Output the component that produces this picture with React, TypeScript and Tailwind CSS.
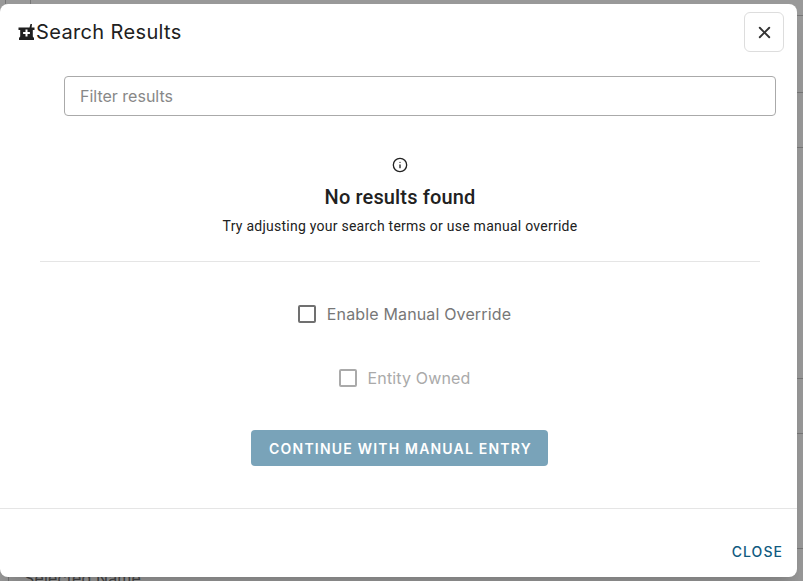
import React from "react";
import { X, Info } from "lucide-react";

const Mortar = () => (
  <svg width="17" height="17" viewBox="0 0 17 17" className="shrink-0">
    <path d="M0.5 3.5H11.5L12.5 0H14L13.6 3.5H16.5V6H14.8V12.5L16 14V16H1V14L2.2 12.5V6H0.5Z" fill="#1f1f1f" />
    <path d="M7.5 5.6H9.5V8H11.9V10H9.5V12.4H7.5V10H5.1V8H7.5Z" fill="#fff" />
  </svg>
);

export default function App() {
  return (
    <div className="relative h-[581px] w-[803px] overflow-hidden bg-[#999999] font-['Inter',sans-serif]">
      <div className="absolute left-[5px] top-0 h-[4px] w-px bg-[#777]" />
      <div className="absolute left-[30px] top-0 h-[4px] w-px bg-[#777]" />
      <div className="absolute left-[8px] top-[577px] h-[4px] w-px bg-[#777]" />
      <div className="absolute left-[797px] top-[15px] h-px w-[6px] bg-[#777]" />
      <div className="absolute left-[797px] top-[92px] h-px w-[6px] bg-[#777]" />
      <div className="absolute left-[797px] top-[147px] h-px w-[6px] bg-[#777]" />
      <div className="absolute left-[797px] top-[378px] h-px w-[6px] bg-[#777]" />
      <div className="absolute left-[797px] top-[433px] h-px w-[6px] bg-[#777]" />
      <div className="absolute left-[797px] top-[548px] h-px w-[6px] bg-[#777]" />
      <div className="absolute left-[24px] top-[566px] text-base tracking-[0.15px] text-[#444]">Selected Name</div>

      <div className="absolute left-0 top-[4px] flex h-[573px] w-[797px] flex-col rounded-lg bg-white shadow-xl">
        <div className="flex h-[56px] items-center justify-between pl-[18px] pr-[13px]">
          <div className="flex items-center">
            <Mortar />
            <span className="ml-px text-[20px] leading-7 tracking-[0.36px] text-[#212121]">Search Results</span>
          </div>
          <button className="flex h-10 w-10 items-center justify-center rounded-md border border-[#dddddd]">
            <X size={19} color="#333" strokeWidth={2.4} />
          </button>
        </div>

        <div className="flex grow flex-col pl-10 pr-[37px]">
          <div className="ml-6 mt-4 flex h-10 w-[712px] items-center rounded border border-[#aaaaaa] px-[15px] text-base text-[#888888]">
            Filter results
          </div>

          <div className="mt-[41px] flex flex-col items-center font-['Roboto',sans-serif]">
            <Info size={16} color="#222" strokeWidth={2} />
            <h2 className="mt-[10px] text-[20px] font-medium leading-7 tracking-[0.15px] text-[#212121]">No results found</h2>
            <p className="mt-[5px] text-sm leading-5 tracking-[0.25px] text-[#212121]">Try adjusting your search terms or use manual override</p>
          </div>

          <div className="mt-[25px] border-t border-[#e5e5e5]" />

          <div className="mt-10 flex items-center justify-center gap-[11px] pl-[9px] text-base leading-6 tracking-[0.15px] text-[#777777]">
            <span className="h-[18px] w-[18px] rounded-[2px] border-2 border-[#707070]" />
            <span>Enable Manual Override</span>
          </div>
          <div className="mt-10 flex items-center justify-center gap-[11px] pl-[9px] text-base leading-6 tracking-[0.15px] text-[#aaaaaa]">
            <span className="h-[18px] w-[18px] rounded-[2px] border-2 border-[#aaaaaa]" />
            <span>Entity Owned</span>
          </div>

          <div className="mt-10 flex justify-center pr-[2px]">
            <button className="h-9 w-[297px] rounded bg-[#79a3b9] pl-[3px] pt-[2px] text-sm font-semibold tracking-[1.2px] text-white">
              CONTINUE WITH MANUAL ENTRY
            </button>
          </div>
        </div>

        <div className="flex h-[69px] items-end justify-end border-t border-[#e5e5e5] pb-[15px] pr-[14px]">
          <span className="text-sm font-medium leading-5 tracking-[1.05px] text-[#0f5a80]">CLOSE</span>
        </div>
      </div>
    </div>
  );
}
